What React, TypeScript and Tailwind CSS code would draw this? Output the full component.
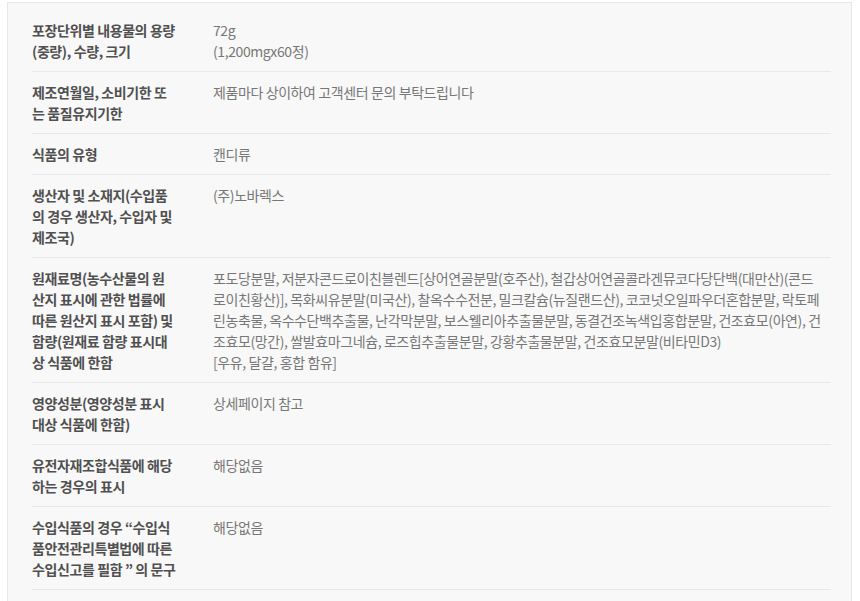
import React from 'react';

interface InfoRow {
  label: string[];
  value: string[];
}

// line breaks follow the original page's wrapping
const rows: InfoRow[] = [
  { label: ['포장단위별 내용물의 용량', '(중량), 수량, 크기'], value: ['72g', '(1,200mgx60정)'] },
  { label: ['제조연월일, 소비기한 또', '는 품질유지기한'], value: ['제품마다 상이하여 고객센터 문의 부탁드립니다'] },
  { label: ['식품의 유형'], value: ['캔디류'] },
  { label: ['생산자 및 소재지(수입품', '의 경우 생산자, 수입자 및', '제조국)'], value: ['(주)노바렉스'] },
  {
    label: ['원재료명(농수산물의 원', '산지 표시에 관한 법률에', '따른 원산지 표시 포함) 및', '함량(원재료 함량 표시대', '상 식품에 한함'],
    value: [
      '포도당분말, 저분자콘드로이친블렌드[상어연골분말(호주산), 철갑상어연골콜라겐뮤코다당단백(대만산)(콘드',
      '로이친황산)], 목화씨유분말(미국산), 찰옥수수전분, 밀크칼슘(뉴질랜드산), 코코넛오일파우더혼합분말, 락토페',
      '린농축물, 옥수수단백추출물, 난각막분말, 보스웰리아추출물분말, 동결건조녹색입홍합분말, 건조효모(아연), 건',
      '조효모(망간), 쌀발효마그네슘, 로즈힙추출물분말, 강황추출물분말, 건조효모분말(비타민D3)',
      '[우유, 달걀, 홍합 함유]',
    ],
  },
  { label: ['영양성분(영양성분 표시', '대상 식품에 한함)'], value: ['상세페이지 참고'] },
  { label: ['유전자재조합식품에 해당', '하는 경우의 표시'], value: ['해당없음'] },
  { label: ['수입식품의 경우 “수입식', '품안전관리특별법에 따른', '수입신고를 필함 ” 의 문구'], value: ['해당없음'] },
];

export default function App() {
  return (
    <div
      className="min-h-[601px] w-[860px] bg-white pl-[7px] pt-[2px]"
      style={{ fontFamily: '"Noto Sans CJK KR", "Noto Sans", sans-serif' }}
    >
      <div className="w-[845px] min-h-[599px] border-l border-r border-t border-[#e6e6e6] bg-[#f8f8f8] pl-[24px] pr-[20px] pt-[7px]">
        {rows.map((row, index) => (
          <div key={index} className="flex border-b border-[#e8e8e8] pt-[10px] pb-[9px] text-[14px] leading-[21px] tracking-[-0.4px]">
            <div className="w-[181px] shrink-0 font-semibold text-[#505050]">
              {row.label.map((line, i) => (
                <div key={i} className="whitespace-nowrap">{line}</div>
              ))}
            </div>
            <div className="w-[617px] text-[#777]">
              {row.value.map((line, i) => (
                <div key={i} className="whitespace-nowrap">{line}</div>
              ))}
            </div>
          </div>
        ))}
      </div>
    </div>
  );
}
